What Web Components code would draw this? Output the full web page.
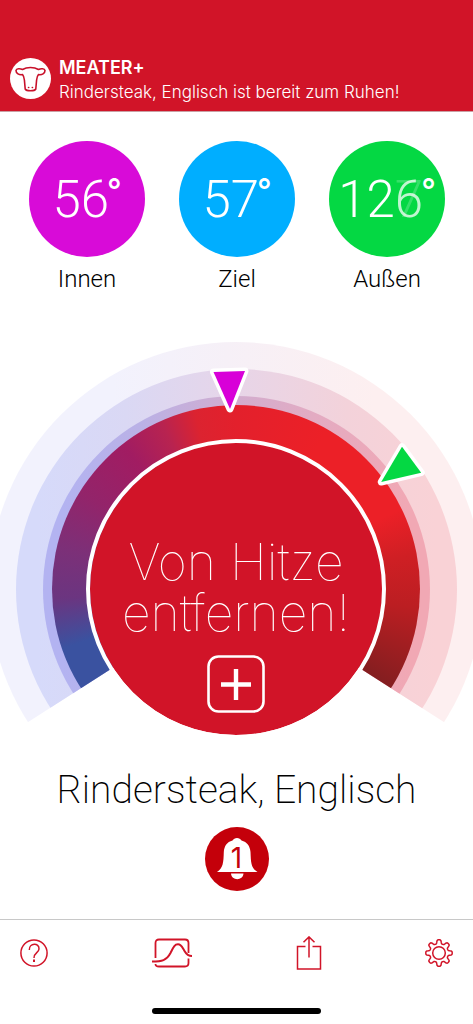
<!DOCTYPE html>
<html lang="de">
<head>
<meta charset="utf-8">
<meta name="viewport" content="width=device-width, initial-scale=1">
<title>MEATER+</title>
<style>
html, body { margin: 0; }
body { background: #fff; font-family: Inter, "Liberation Sans", sans-serif; color: #000; }
</style>
</head>
<body>
<meater-app></meater-app>

<template id="app-tpl">
<style>
:host { display: flex; flex-direction: column; min-height: 100vh; overflow: hidden; }
.temps { display: flex; justify-content: space-between; padding: 29px 28px 0 29px; }
main { flex: 1; display: flex; flex-direction: column; }
cook-dial { margin-top: 48px; }
h1 { margin: 30px 0 0; font-size: 39px; line-height: 48px; font-weight: 200; font-family: Roboto, sans-serif; text-align: center; }
alert-bell { align-self: center; margin-top: 13px; }
</style>
<probe-banner heading="MEATER+">Rindersteak, Englisch ist bereit zum Ruhen!</probe-banner>
<main>
  <div class="temps">
    <temp-badge label="Innen" value="56" style="--badge:#d80bd8"></temp-badge>
    <temp-badge label="Ziel" value="57" style="--badge:#00aeff"></temp-badge>
    <temp-badge label="Außen" value="12" rolling="6" next="7" style="--badge:#04d843"></temp-badge>
  </div>
  <cook-dial>Von Hitze entfernen!</cook-dial>
  <h1>Rindersteak, Englisch</h1>
  <alert-bell count="1"></alert-bell>
</main>
<tab-bar></tab-bar>
</template>

<template id="banner-tpl">
<style>
:host { display: block; background: #d11428; color: #fff; border-bottom: 1px solid #c9a0a4; padding-top: 52px; }
header { display: flex; align-items: center; gap: 8px; padding: 0 10px 3px; height: 56px; }
svg { flex: none; width: 41px; height: 41px; margin-bottom: 4px; }
strong { display: block; font-size: 18px; line-height: 24px; font-weight: 600; }
p { margin: 0; font-size: 17px; line-height: 24px; font-weight: 300; white-space: nowrap; }
</style>
<header>
  <svg viewBox="0 0 41 41" aria-hidden="true"><circle cx="20.500" cy="20.500" r="20.500" fill="#fff"/>
  <g fill="none" stroke="#c8102a" stroke-width="1.600" stroke-linejoin="round" stroke-linecap="round"><path d="M12.500 11.500C17 8.800 24 8.800 28.500 11.500C31 10.300 34.500 10.400 35 12.500C35 15.500 32 17.200 28.500 16.600C27.300 18 26.800 20 26.600 22L25.800 31C24.500 33.400 16.500 33.400 15.200 31L14.400 22C14.200 20 13.700 18 12.500 16.600C9 17.200 6 15.500 6 12.500C6.500 10.400 10 10.300 12.500 11.500Z"/><path d="M18.500 29.500h.2M22.300 29.500h.2"/></g></svg>
  <div><strong></strong><p><slot></slot></p></div>
</header>
</template>

<template id="badge-tpl">
<style>
:host { display: flex; flex-direction: column; align-items: center; width: 116px; }
.disc { width: 116px; height: 116px; border-radius: 50%; background: var(--badge); color: #fff; display: flex; justify-content: center; align-items: center; font: 300 51px/60px Roboto, sans-serif; }
.num, .roll { padding-top: 2px; }
.roll { display: grid; }
.roll span { grid-area: 1 / 1; opacity: .75; }
.roll span + span { opacity: .2; }
.deg { font: 500 32px/60px Inter, sans-serif; padding-bottom: 16px; margin-left: -2px; }
.label { font: 300 24px/30px Roboto, sans-serif; margin-top: 7px; }
</style>
<div class="disc"><span class="num"></span><span class="roll" hidden><span></span><span></span></span><span class="deg">°</span></div>
<div class="label"></div>
</template>

<template id="dial-tpl">
<style>
:host { display: flex; justify-content: center; overflow: hidden; }
.stage { flex: none; display: grid; width: 494px; height: 494px; margin: 0 1px -100px 0; }
.stage > * { grid-area: 1 / 1; }
.rings { display: grid; place-items: center; clip-path: polygon(50% 50%, 0 82%, 0 0, 100% 0, 100% 82%); }
.rings i { grid-area: 1 / 1; border-radius: 50%; }
.r1 { width: 494px; height: 494px; background: linear-gradient(90deg, #f2f2fd 25%, #f6f0f7 48%, #fdeff0 78%); }
.r2 { width: 441px; height: 441px; background: linear-gradient(90deg, #d6dafa 5%, #dad8f4 25%, #e7d5e8 50%, #f3d2da 75%, #f9d2d6 95%); }
.r3 { width: 387px; height: 387px; background: linear-gradient(90deg, #b3b3f1 5%, #bab1e6 25%, #d0add0 48%, #e3abc2 70%, #f1a8b4 95%); }
.r4 { width: 368px; height: 368px; background: conic-gradient(#e3202c 0deg, #ec2027 30deg, #ec2027 64deg, #cf1f24 79deg, #bb1e22 96deg, #851e20 122deg, #3a52a0 238deg, #3a52a0 251deg, #6b3580 267deg, #7c3078 283deg, #93246a 302deg, #a11c62 322deg, #b82350 336deg, #dc2330 347deg, #e3202c 360deg); }
.core { z-index: 1; place-self: center; box-sizing: border-box; width: 300px; height: 300px; border-radius: 50%; border: 4px solid #fff; background: #d11428; background-clip: padding-box; display: flex; flex-direction: column; align-items: center; color: #fff; }
p { margin: 94px 0 0; width: 240px; text-align: center; font-size: 50px; line-height: 51px; font-weight: 100; }
button { margin: 16px 0 0; padding: 0; border: 0; background: none; width: 58px; height: 58px; }
svg { display: block; }
.marks { z-index: 1; pointer-events: none; }
</style>
<div class="stage">
  <div class="rings"><i class="r1"></i><i class="r2"></i><i class="r3"></i><i class="r4"></i></div>
  <div class="core"><p><slot></slot></p>
    <button aria-label="Hinzufügen"><svg width="58" height="58" viewBox="0 0 58 58" fill="none" stroke="#fff"><rect x="1.500" y="1.500" width="55" height="55" rx="10" stroke-width="2.600"/><path d="M14 29.500H44M29 14V45" stroke-width="4.400"/></svg></button>
  </div>
  <svg class="marks" width="494" height="494" viewBox="0 0 494 494" stroke="#fff" stroke-width="7" stroke-linejoin="round" paint-order="stroke" aria-hidden="true">
    <path d="M224.500 30L256 29L241 67Z" fill="#d800d8"/><path d="M413 104.700L432.200 130.700L392.200 140Z" fill="#04d843"/>
  </svg>
</div>
</template>

<template id="bell-tpl">
<style>
:host { display: block; }
button { display: grid; place-items: center; padding: 0; border: 0; width: 64px; height: 64px; border-radius: 50%; background: #c4000a; color: #c4000a; font: 400 28px/32px Inter, sans-serif; }
button > * { grid-area: 1 / 1; }
span { padding-bottom: 2px; }
</style>
<button aria-label="Alarme"><svg width="64" height="64" viewBox="0 0 64 64" fill="#fff" aria-hidden="true"><path d="M32 11C34 11 35.500 12 36.500 13.500C42 15 45 19 45.500 25C46 36 46 41 52.500 45H12C18 41 18.500 36 18.800 25C19.300 19 22 15 27.500 13.500C28.500 12 30 11 32 11ZM26 46.500H38.500C38 54 26.500 54 26 46.500Z"/></svg><span></span></button>
</template>

<template id="tabs-tpl">
<style>
:host { display: block; border-top: 1px solid #c8c8c8; }
nav { display: flex; justify-content: space-between; align-items: center; padding: 12px 20px 0 20px; height: 42px; }
button { display: block; padding: 0; border: 0; background: none; color: #d11428; }
svg { display: block; fill: none; stroke: currentColor; stroke-width: 1.500; }
.home { width: 169px; height: 6px; border-radius: 3px; background: #000; margin: 34px auto 10px; }
</style>
<nav>
  <button aria-label="Hilfe"><svg width="28" height="28" viewBox="0 0 28 28"><circle cx="14" cy="14" r="13.100"/><path d="M9.300 11C9.200 3.600 19.400 3.600 19 10C18.700 14 14 13.500 14 19"/><path d="M14 20.500V23" stroke-width="2"/></svg></button>
  <button aria-label="Diagramm"><svg width="42" height="30" viewBox="0 0 42 30"><path d="M4.500 20V5Q4.500 1.500 8 1.500H34Q37.500 1.500 37.500 5V15M37.500 20.500V25Q37.500 28.500 34 28.500H8Q4.500 28.500 4.500 26" stroke-width="1.800"/><path d="M1 23.500C11 23.500 15.500 22.500 19.500 15C22.500 9 23.500 6.300 27 6.300C30.500 6.300 31.500 10 33.500 13C35.500 16.500 37.500 18 41 18" stroke-width="2"/></svg></button>
  <button aria-label="Teilen"><svg width="26" height="34" viewBox="0 0 26 34"><path d="M9.500 10.500H1.500V33H24.500V10.500H16.500M13 21.500V1M7.500 6.300L13 .900L18.500 6.300"/></svg></button>
  <button aria-label="Einstellungen"><svg width="28" height="28" viewBox="0 0 28 28"><circle cx="14" cy="14" r="6.300"/><path class="gear" stroke-linejoin="round"/></svg></button>
</nav>
<div class="home"></div>
</template>

<script>
class Base extends HTMLElement {
  constructor() {
    super();
    const root = this.attachShadow({ mode: 'open' });
    root.append(document.getElementById(this.constructor.tpl).content.cloneNode(true));
  }
  $(s) { return this.shadowRoot.querySelector(s); }
}
customElements.define('probe-banner', class extends Base {
  static tpl = 'banner-tpl';
  connectedCallback() { this.$('strong').textContent = this.getAttribute('heading'); }
});
customElements.define('temp-badge', class extends Base {
  static tpl = 'badge-tpl';
  connectedCallback() {
    this.$('.num').textContent = this.getAttribute('value');
    this.$('.label').textContent = this.getAttribute('label');
    const roll = this.$('.roll');
    if (this.hasAttribute('rolling')) {
      roll.hidden = false;
      roll.children[0].textContent = this.getAttribute('rolling');
      roll.children[1].textContent = this.getAttribute('next');
    } else roll.remove();
  }
});
customElements.define('cook-dial', class extends Base { static tpl = 'dial-tpl'; });
customElements.define('alert-bell', class extends Base {
  static tpl = 'bell-tpl';
  connectedCallback() { this.$('span').textContent = this.getAttribute('count'); }
});
customElements.define('tab-bar', class extends Base {
  static tpl = 'tabs-tpl';
  connectedCallback() {
    // Eight soft teeth: the radius swings between valley and tip.
    const pts = [];
    for (let a = 0; a < 360; a += 3) {
      const t = a * Math.PI / 180;
      const r = 11.3 + 1.9 * Math.tanh(2.2 * Math.cos(8 * t)) / Math.tanh(2.2);
      pts.push((14 + r * Math.sin(t)).toFixed(2) + ' ' + (14 - r * Math.cos(t)).toFixed(2));
    }
    this.$('.gear').setAttribute('d', 'M' + pts.join('L') + 'Z');
  }
});
customElements.define('meater-app', class extends Base { static tpl = 'app-tpl'; });
</script>
</body>
</html>
